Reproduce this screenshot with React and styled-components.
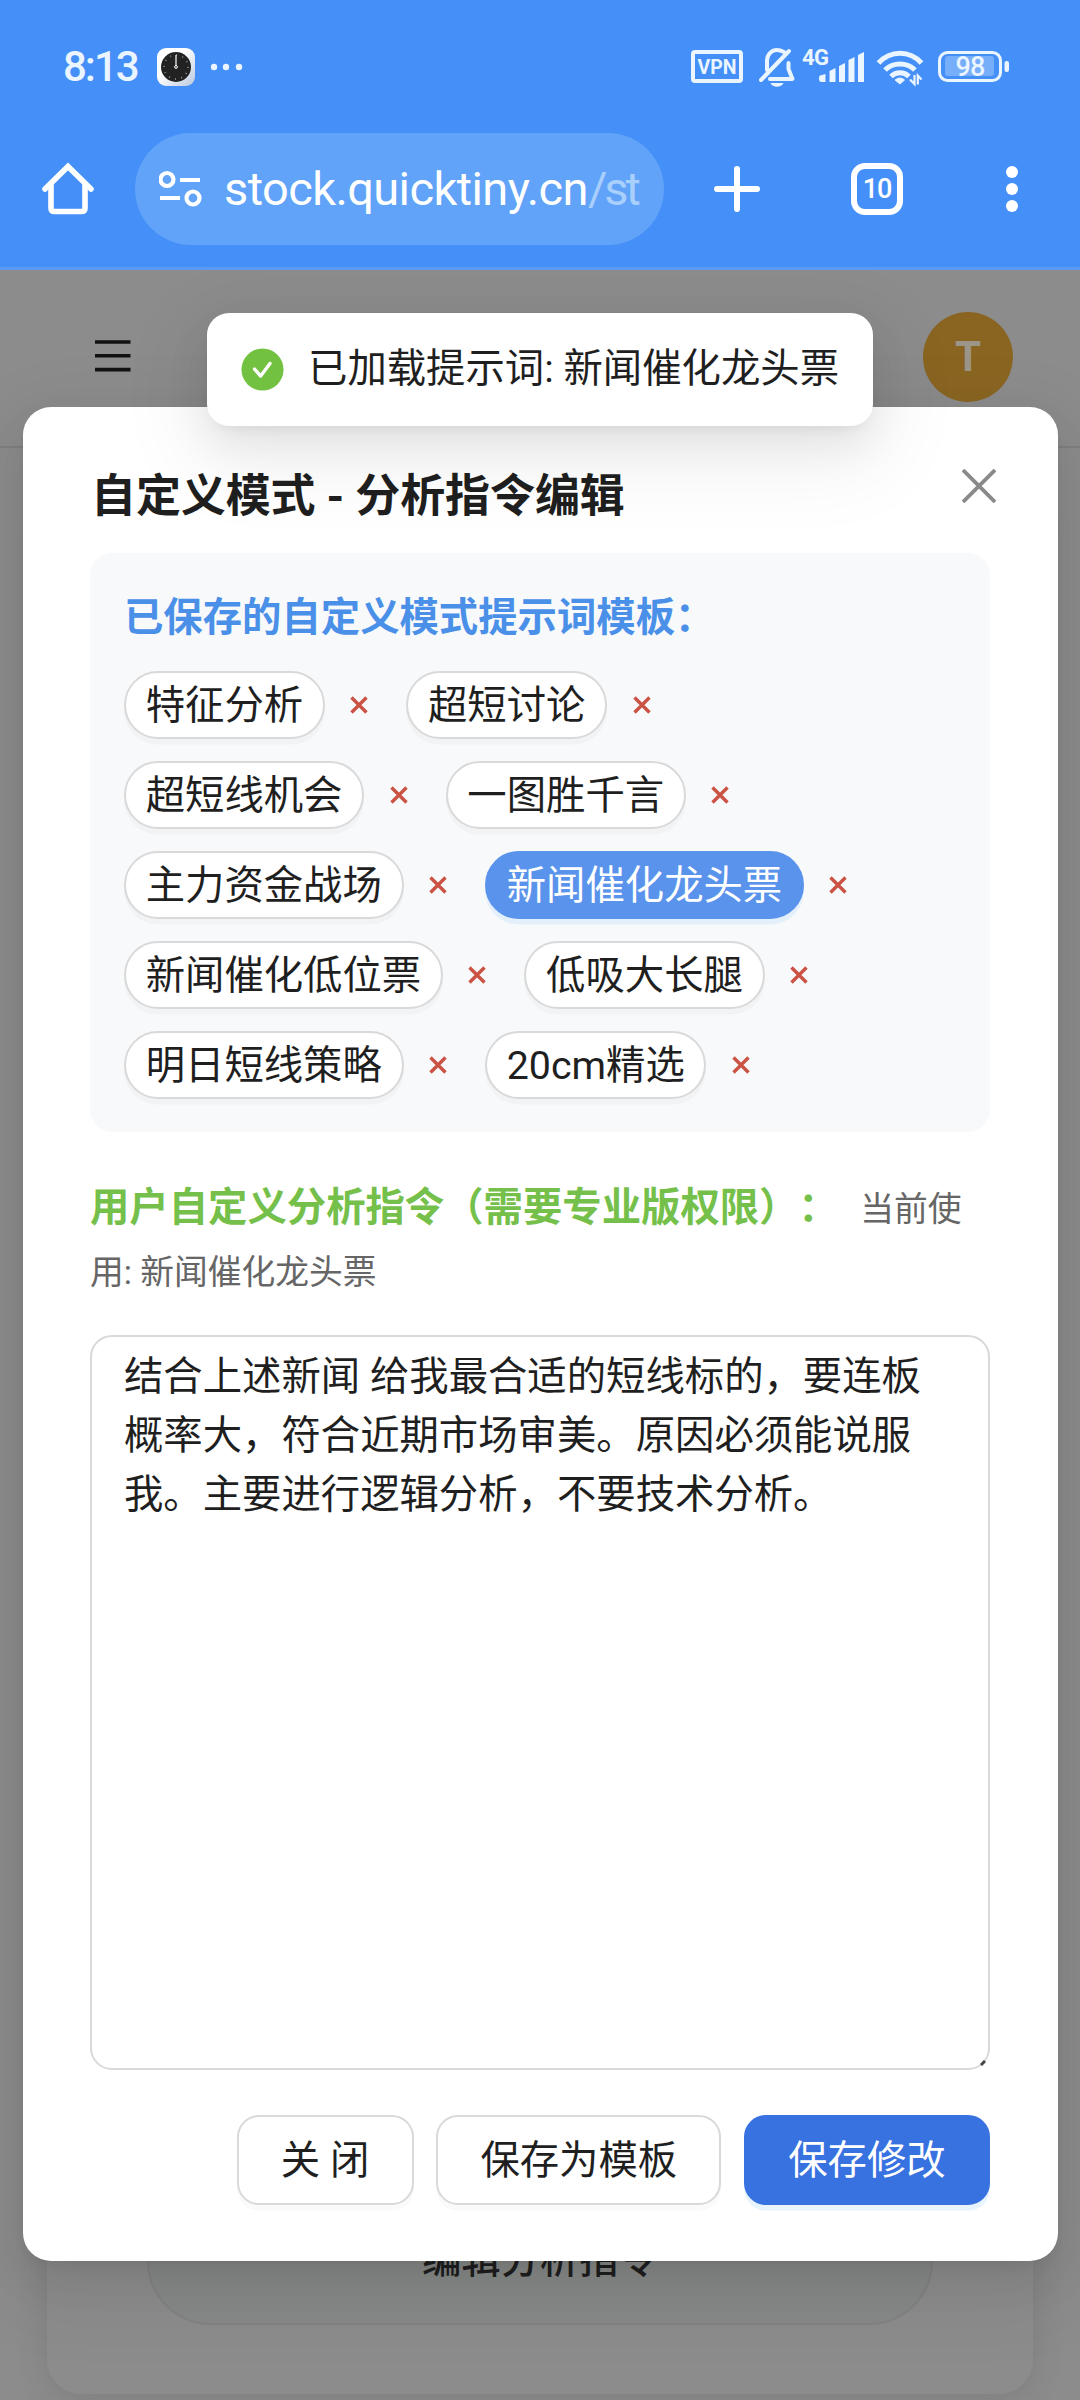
import React, { useState } from "react";
import styled, { createGlobalStyle } from "styled-components";

const GlobalStyle = createGlobalStyle`
  * {
    box-sizing: border-box;
  }
  body {
    margin: 0;
    background-color: #8c8c8c;
    font-family: Roboto, "Noto Sans CJK SC", sans-serif;
    font-size: 39.375px;
    color: #1f1f1f;
    text-spacing-trim: space-all;
  }
  button, textarea {
    font: inherit;
    color: inherit;
  }
`;

const Screen = styled.div`
  position: relative;
  display: flex;
  flex-direction: column;
  width: 1080px;
  height: 2400px;
  overflow: hidden;
`;

/* phone and browser chrome */
const Chrome = styled.header`
  position: relative;
  z-index: 3;
  height: 270px;
  flex: none;
  background-color: #458ff8;
  border-bottom: 3px solid #5a9af2;
  color: #fff;
`;
const StatusBar = styled.div`
  display: flex;
  align-items: center;
  height: 133px;
  padding: 0 71px 0 63px;
  color: #eaf5ff;
`;
const Time = styled.span`
  width: 94px;
  font-size: 42px;
  font-weight: 500;
  letter-spacing: -2px;
`;
const StatusIcons = styled.div`
  display: flex;
  align-items: center;
  margin-left: auto;
`;
const Toolbar = styled.div`
  display: flex;
  align-items: center;
  height: 112px;
  padding-left: 42px;
`;
const UrlPill = styled.div`
  display: flex;
  align-items: center;
  width: 529px;
  height: 112px;
  margin-left: 41px;
  padding: 0 23px 0 24px;
  border-radius: 56px;
  background-color: #60a3f8;
`;
const Url = styled.div`
  flex: 1;
  margin-left: 21px;
  overflow: hidden;
  white-space: nowrap;
  font-size: 47px;
  line-height: 60px;
  letter-spacing: -0.6px;
`;
const UrlPath = styled.span`
  color: #a9cffc;
  letter-spacing: -3px;
`;
const ToolbarButton = styled.div`
  display: flex;
  margin-left: ${(props) => props.gap}px;
`;
const TabCount = styled.div`
  display: flex;
  align-items: center;
  justify-content: center;
  width: 52px;
  height: 52px;
  border: 6px solid #fff;
  border-radius: 14px;
  font-size: 27px;
  font-weight: 500;
  letter-spacing: -1.2px;
`;

/* page behind the modal */
const Page = styled.main`
  display: flex;
  flex-direction: column;
  flex: 1;
`;
const AppBar = styled.div`
  display: flex;
  align-items: center;
  justify-content: space-between;
  height: 178px;
  padding: 0 67px 3px 95px;
  border-bottom: 2px solid #7f7f7f;
`;
const Avatar = styled.div`
  display: flex;
  align-items: center;
  justify-content: center;
  width: 90px;
  height: 90px;
  border-radius: 50%;
  background-color: #8a6522;
  color: #9c958a;
  font-size: 42px;
  font-weight: 700;
`;
const Card = styled.section`
  display: flex;
  flex: 1;
  align-items: flex-end;
  margin: 45px 47px 6px;
  padding: 0 100px 69px;
  border-radius: 34px;
  background-color: #8c8c8c;
  box-shadow: 0 6px 34px rgba(0, 0, 0, 0.1);
`;
const EditButton = styled.button`
  flex: 1;
  height: 135px;
  padding-bottom: 5px;
  border: 2px solid #828282;
  border-radius: 64px;
  background-color: #868987;
  font-weight: 500;
`;

/* modal */
const softShadow = `0 17px 45px rgba(0, 0, 0, 0.08), 0 8px 17px -11px rgba(0, 0, 0, 0.12), 0 25px 79px 22px rgba(0, 0, 0, 0.05)`;

const Modal = styled.div`
  position: absolute;
  z-index: 1;
  top: 407px;
  left: 23px;
  width: 1035px;
  height: 1854px;
  padding: 54px 68px 56px 67px;
  border-radius: 28px;
  background-color: #fff;
  box-shadow: ${softShadow};
`;
const ModalHead = styled.div`
  display: flex;
  justify-content: space-between;
  height: 92px;
`;
const ModalTitle = styled.h1`
  margin: 2px 0 0 1px;
  font-size: 45px;
  font-weight: 700;
  letter-spacing: -0.1px;
  line-height: 68px;
`;
const CloseIcon = styled.svg`
  margin: 8px -6px 0 0;
`;
const Saved = styled.div`
  height: 579px;
  padding: 34px 34px 32px;
  border-radius: 22px;
  background-color: #f8f9fb;
`;
const SavedTitle = styled.h2`
  margin: 0 0 22px;
  color: #4a90e8;
  font-size: 39.375px;
  font-weight: 700;
  line-height: 62px;
`;
const ChipList = styled.div`
  display: flex;
  flex-wrap: wrap;
  gap: 22.5px 12.5px;
`;
const ChipItem = styled.div`
  display: flex;
  align-items: center;
`;
const Chip = styled.button`
  height: 67.5px;
  padding: 0 19.7px 6px;
  border: 2px solid ${(props) => (props.$active ? "#5a93ec" : "#d9d9d9")};
  border-radius: 45px;
  background-color: ${(props) => (props.$active ? "#5a93ec" : "#fff")};
  box-shadow: 0 5.6px 0 ${(props) => (props.$active ? "#e3f0fc" : "#f2f3f5")};
  color: ${(props) => (props.$active ? "#fff" : "#1f1f1f")};
  white-space: nowrap;
`;
const Remove = styled.button`
  display: flex;
  align-items: center;
  justify-content: center;
  width: 69px;
  height: 67px;
  padding: 0;
  border: 0;
  background: none;
`;
const Label = styled.p`
  margin: 45px 0 34px;
  line-height: 61px;
  height: 124px;
  color: #75c04a;
  font-weight: 700;
`;
const Current = styled.span`
  margin-left: 22.5px;
  color: #666;
  font-size: 33.75px;
  font-weight: 400;
`;
const Field = styled.div`
  position: relative;
  height: 735px;
`;
const Prompt = styled.textarea`
  display: block;
  width: 100%;
  height: 735px;
  padding: 10px 32px;
  border: 2px solid #d9d9d9;
  border-radius: 22px;
  outline: none;
  resize: none;
  line-height: 59.06px;
  background-color: #fff;
`;
const Grip = styled.svg`
  position: absolute;
  right: 4px;
  bottom: 4px;
`;
const Footer = styled.div`
  display: flex;
  justify-content: flex-end;
  gap: 22.5px;
  margin-top: 45px;
`;
const Button = styled.button`
  height: 90px;
  padding: 0 42.3px 8px;
  border: 2px solid ${(props) => (props.$primary ? "#3872e0" : "#d9d9d9")};
  border-radius: 22px;
  background-color: ${(props) => (props.$primary ? "#3872e0" : "#fff")};
  box-shadow: 0 5.6px 0 ${(props) => (props.$primary ? "#e8f4fd" : "#fafafa")};
  color: ${(props) => (props.$primary ? "#fff" : "#1f1f1f")};
`;

/* toast */
const Toast = styled.div`
  position: absolute;
  z-index: 2;
  top: 313px;
  left: 207px;
  display: flex;
  align-items: center;
  width: 666px;
  height: 113px;
  padding: 0 34px;
  border-radius: 22px;
  background-color: #fff;
  box-shadow: ${softShadow};
  white-space: nowrap;
`;
const ToastText = styled.span`
  margin: -10px 0 0 24px;
`;

const templates = [
  "特征分析",
  "超短讨论",
  "超短线机会",
  "一图胜千言",
  "主力资金战场",
  "新闻催化龙头票",
  "新闻催化低位票",
  "低吸大长腿",
  "明日短线策略",
  "20cm精选",
];

const ClockIcon = () => (
  <svg width="38" height="38" viewBox="0 0 38 38">
    <defs>
      <linearGradient id="clock" x1="0" y1="0" x2="1" y2="1">
        <stop offset="0.4" stopColor="#fff" />
        <stop offset="1" stopColor="#b9c8de" />
      </linearGradient>
    </defs>
    <rect width="38" height="38" rx="9" fill="url(#clock)" />
    <circle cx="19" cy="19" r="15" fill="#222" />
    <circle cx="19" cy="19" r="12" fill="none" stroke="#999" strokeWidth="2" strokeDasharray="0.8 5.48" />
    <path d="M19 18V7" stroke="#fff" strokeWidth="1.2" />
    <circle cx="19" cy="19" r="1.4" fill="none" stroke="#fff" />
  </svg>
);

const DotsSvg = styled.svg`
  margin-left: 15px;
`;
const StatusDots = () => (
  <DotsSvg width="34" height="8" viewBox="0 0 34 8" fill="currentColor">
    <circle cx="4" cy="4" r="3.2" />
    <circle cx="16" cy="4" r="3.2" />
    <circle cx="29" cy="4" r="3.2" />
  </DotsSvg>
);

const StatusSvg = () => (
  <svg width="320" height="44" viewBox="689 44 320 44" fill="none" stroke="currentColor">
    <rect x="693" y="51" width="48" height="29" rx="2" strokeWidth="4" />
    <text x="717" y="72.5" textAnchor="middle" fontSize="19.5" fontWeight="700" fill="currentColor" stroke="none">VPN</text>
    {/* muted bell */}
    <g strokeWidth="4" strokeLinejoin="round" strokeLinecap="round">
      <path d="M767 69V60c0-7 5-11 10-11 3 0 5 1 7 2M788.500 62v6l4 10H770" />
      <path d="M761 79L789 50" />
    </g>
    <path d="M770.500 82h13c-2 5-11 5-13 0z" fill="currentColor" stroke="none" />
    <text x="802" y="63.500" fontSize="22" fontWeight="700" letterSpacing="-0.5" fill="currentColor" stroke="none">4G</text>
    <g fill="currentColor" stroke="none">
      <path d="M819 77q0-3 3-3l3.500-1v8h-4q-2.500 0-2.500-3z" />
      <path d="M829.500 70l6-3v14h-6z" />
      <path d="M839 65l6-3v19h-6z" />
      <path d="M848.500 59l6-3v25h-6z" />
      <path d="M858 54l6-3v30h-6z" />
    </g>
    <g strokeWidth="5">
      <path d="M878.500 62c12-13 31-13 43 0" />
      <path d="M885 69c8-8 22-8 30 0" />
      <path d="M891 75.500c5-5 13-5 18 0" />
    </g>
    <path d="M895 79q5-4 9.500 0l-4.500 4z" fill="currentColor" strokeWidth="1" />
    {/* traffic arrows */}
    <path d="M914.500 74v9l-4.500-4.500M917.800 83.500v-9l3.700 4" strokeWidth="2.200" />
    <rect x="939.500" y="51.500" width="61" height="28" rx="8" strokeWidth="3" />
    <rect x="945" y="55" width="49" height="20" rx="3" fill="#77aefa" stroke="none" />
    <text x="970" y="75.200" textAnchor="middle" fontSize="27" fontWeight="500" letterSpacing="-0.8" fill="currentColor" stroke="none">98</text>
    <rect x="1004.500" y="60" width="4.500" height="11" rx="2" fill="currentColor" stroke="none" />
  </svg>
);

const HomeIcon = () => (
  <svg width="52" height="54" viewBox="42 162 52 54" fill="none" stroke="#fff" strokeWidth="5.600" strokeLinecap="round">
    <path d="M45 189L68 166.500L91 189" />
    <path d="M51 185v23q0 3.500 3.500 3.500h27q3.500 0 3.500-3.500v-23" />
  </svg>
);

const TuneIcon = () => (
  <svg width="44" height="38" viewBox="159 170 44 38" fill="none" stroke="#fff" strokeWidth="4.200">
    <circle cx="167" cy="179.500" r="6.500" />
    <path d="M180 180h20M160 198h20" />
    <circle cx="193" cy="198" r="6.500" />
  </svg>
);

const PlusIcon = () => (
  <svg width="46" height="46" viewBox="0 0 46 46" stroke="#fff" strokeWidth="6" strokeLinecap="round">
    <path d="M23 3v40M3 23h40" />
  </svg>
);

const MoreIcon = () => (
  <svg width="12" height="46" viewBox="0 0 12 46" fill="#fff">
    <circle cx="6" cy="6" r="6" />
    <circle cx="6" cy="23" r="6" />
    <circle cx="6" cy="40" r="6" />
  </svg>
);

const MenuSvg = styled.svg`
  margin-top: -2px;
`;
const MenuIcon = () => (
  <MenuSvg width="36" height="32" viewBox="0 0 36 32" stroke="#121212" strokeWidth="3.600">
    <path d="M0 2h35.500M0 15.800h35.500M0 29.600h35.500" />
  </MenuSvg>
);

const CheckIcon = () => (
  <svg width="46" height="46" viewBox="0 0 46 46">
    <circle cx="23" cy="22.500" r="22.500" fill="#73c140" />
    <path d="M14.500 22l6.500 7.500L31 16" fill="none" stroke="#fff" strokeWidth="3.600" strokeLinecap="round" strokeLinejoin="round" />
  </svg>
);

const RemoveIcon = () => (
  <svg width="18" height="18" viewBox="0 0 18 18" stroke="#cb5344" strokeWidth="3.400">
    <path d="M1.500 1.500l15 15M16.500 1.500l-15 15" />
  </svg>
);

const App = () => {
  const [active, setActive] = useState("新闻催化龙头票");
  const [prompt, setPrompt] = useState(
    "结合上述新闻 给我最合适的短线标的，要连板概率大，符合近期市场审美。原因必须能说服我。主要进行逻辑分析，不要技术分析。"
  );

  return (
    <Screen lang="zh-CN">
      <GlobalStyle />
      <Chrome>
        <StatusBar>
          <Time>8:13</Time>
          <ClockIcon />
          <StatusDots />
          <StatusIcons>
            <StatusSvg />
          </StatusIcons>
        </StatusBar>
        <Toolbar>
          <HomeIcon />
          <UrlPill>
            <TuneIcon />
            <Url>
              stock.quicktiny.cn<UrlPath>/str</UrlPath>
            </Url>
          </UrlPill>
          <ToolbarButton gap={50}>
            <PlusIcon />
          </ToolbarButton>
          <ToolbarButton gap={91}>
            <TabCount>10</TabCount>
          </ToolbarButton>
          <ToolbarButton gap={103}>
            <MoreIcon />
          </ToolbarButton>
        </Toolbar>
      </Chrome>
      <Page>
        <AppBar>
          <MenuIcon />
          <Avatar>T</Avatar>
        </AppBar>
        <Card>
          <EditButton>编辑分析指令</EditButton>
        </Card>
      </Page>
      <Modal>
        <ModalHead>
          <ModalTitle>自定义模式 - 分析指令编辑</ModalTitle>
          <CloseIcon width="34" height="34" viewBox="0 0 34 34" stroke="#8a8a8a" strokeWidth="3.800">
            <path d="M1 1l32 32M33 1L1 33" />
          </CloseIcon>
        </ModalHead>
        <Saved>
          <SavedTitle>已保存的自定义模式提示词模板：</SavedTitle>
          <ChipList>
            {templates.map((t) => (
              <ChipItem key={t}>
                <Chip $active={t === active} onClick={() => setActive(t)}>{t}</Chip>
                <Remove>
                  <RemoveIcon />
                </Remove>
              </ChipItem>
            ))}
          </ChipList>
        </Saved>
        <Label>
          用户自定义分析指令（需要专业版权限）：
          <Current>当前使用: {active}</Current>
        </Label>
        <Field>
          <Prompt value={prompt} spellCheck={false} onChange={(e) => setPrompt(e.target.value)} />
          <Grip width="6" height="6" viewBox="0 0 6 6" stroke="#444" strokeWidth="3">
            <path d="M1 5L5 1" />
          </Grip>
        </Field>
        <Footer>
          <Button>关 闭</Button>
          <Button>保存为模板</Button>
          <Button $primary>保存修改</Button>
        </Footer>
      </Modal>
      <Toast>
        <CheckIcon />
        <ToastText>已加载提示词: 新闻催化龙头票</ToastText>
      </Toast>
    </Screen>
  );
};

export default App;
